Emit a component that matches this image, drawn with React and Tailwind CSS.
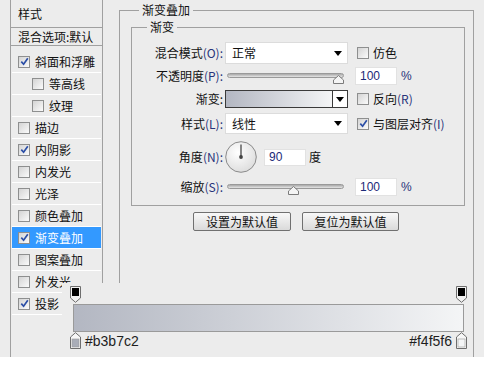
import React from "react";

const items = [
  { label: "斜面和浮雕", checked: true },
  { label: "等高线", indent: true },
  { label: "纹理", indent: true },
  { label: "描边" },
  { label: "内阴影", checked: true },
  { label: "内发光" },
  { label: "光泽" },
  { label: "颜色叠加" },
  { label: "渐变叠加", checked: true, active: true },
  { label: "图案叠加" },
  { label: "外发光" },
  { label: "投影", checked: true },
];

function Check({ checked }) {
  return (
    <span className="flex h-[12px] w-[12px] shrink-0 items-center justify-center border border-[#8e8f8f] bg-gradient-to-br from-[#d4d4d4] to-[#fbfbfb]">
      {checked && (
        <svg width="9" height="9" viewBox="0 0 9 9">
          <path d="M1.3 4.6 L3.6 7.2 L7.8 1.2" stroke="#2b4ea6" strokeWidth="1.7" fill="none" />
        </svg>
      )}
    </span>
  );
}

function Arrow() {
  return <span className="h-0 w-0 border-x-[4px] border-t-[5px] border-x-transparent border-t-black" />;
}

function Key({ children }) {
  return <span className="text-[#27337a]">{children}</span>;
}

function Label({ children }) {
  return <span className="w-[91px] shrink-0 text-right">{children}</span>;
}

function Thumb() {
  return (
    <svg width="11" height="9" viewBox="0 0 11 9">
      <path d="M5.5 0.5 L10.5 5 V8.5 H0.5 V5 Z" fill="#f4f4f4" stroke="#7b7b7b" />
    </svg>
  );
}

function Slider({ pos }) {
  return (
    <div className="relative ml-[2px] h-[18px] w-[123px]">
      <div className="ml-[2px] mt-[6px] h-[5px] w-[117px] rounded-full border border-[#9a9a9a] bg-gradient-to-b from-[#a9a9a9] to-[#e6e6e6]" />
      <div className="absolute top-[8px]" style={{ left: pos }}>
        <Thumb />
      </div>
    </div>
  );
}

function NumBox({ value, w = "w-[42px]", h = "h-[18px]" }) {
  return (
    <span className={`${w} ${h} flex items-center border border-[#e2e2e2] bg-white pl-[4px] font-['Liberation_Sans',sans-serif] text-[12px] text-[#1c2a78]`}>
      {value}
    </span>
  );
}

function Select({ value }) {
  return (
    <div className="ml-[2px] flex h-full w-[123px] items-center justify-between border border-[#dcdcdc] bg-white pl-[6px] pr-[5px]">
      <span>{value}</span>
      <Arrow />
    </div>
  );
}

function LeftPanel() {
  return (
    <div className="ml-[10px] flex h-full w-[93px] flex-col border-x border-[#a0a0a0] px-[1px]">
      <div className="-mx-[1px] flex h-[28px] items-center border-b border-[#a0a0a0] pl-[7px]">样式</div>
      <div className="-mx-[1px] flex h-[18px] items-center border-b border-[#a0a0a0] pl-[7px] whitespace-nowrap">
        混合选项:默认
      </div>
      <div className="pt-[5px]">
        {items.map((it) => (
          <div
            key={it.label}
            className={`flex h-[22px] items-center gap-[5px] border-b border-white whitespace-nowrap ${
              it.indent ? "pl-[20px]" : "pl-[6px]"
            } ${it.active ? "bg-[#3399ff] text-white" : ""}`}
          >
            <Check checked={it.checked} />
            <span>{it.label}</span>
          </div>
        ))}
      </div>
    </div>
  );
}

function TopStop() {
  return (
    <svg width="11" height="17" viewBox="0 0 11 17">
      <path d="M0.5 0.5 H10.5 V12 L5.5 16.3 L0.5 12 Z" fill="#f2f2f2" stroke="#6e6e6e" />
      <rect x="2" y="2" width="7" height="8" fill="#000" />
    </svg>
  );
}

function BottomStop({ color }) {
  return (
    <svg width="11" height="17" viewBox="0 0 11 17">
      <path d="M5.5 0.7 L10.5 5 V16.5 H0.5 V5 Z" fill="#f7f7f7" stroke="#6e6e6e" />
      <rect x="2" y="7" width="7" height="8" fill={color} stroke="#9a9a9a" strokeWidth="0.6" />
    </svg>
  );
}

function GradientOverlay() {
  return (
    <div className="absolute left-[62px] top-[283px] flex h-[74px] w-[409px] flex-col bg-[#ececec]">
      <div className="mt-[3px] flex h-[17px] justify-between pl-[8px] pr-[4px]">
        <TopStop />
        <TopStop />
      </div>
      <div className="ml-[11px] mt-[1px] h-[28px] w-[391px] border border-[#9a9a9a] bg-gradient-to-r from-[#b3b7c2] to-[#f4f5f6]" />
      <div className="mt-[0px] flex h-[17px] items-center justify-between pl-[8px] pr-[4px] font-['Liberation_Sans',sans-serif] text-[14px] text-[#1e1e1e]">
        <div className="flex items-center gap-[4px]">
          <BottomStop color="#a9adb8" />
          <span className="leading-none">#b3b7c2</span>
        </div>
        <div className="flex items-center gap-[4px]">
          <span className="leading-none">#f4f5f6</span>
          <BottomStop color="#f4f5f6" />
        </div>
      </div>
    </div>
  );
}

function Dial() {
  return (
    <svg width="32" height="32" viewBox="0 0 32 32" className="ml-[2px]">
      <defs>
        <radialGradient id="dialg" cx="0.4" cy="0.35" r="0.7">
          <stop offset="0" stopColor="#ffffff" />
          <stop offset="1" stopColor="#dcdcdc" />
        </radialGradient>
      </defs>
      <circle cx="16" cy="16" r="15.3" fill="url(#dialg)" stroke="#8a8a8a" />
      <line x1="16" y1="16" x2="16" y2="3.5" stroke="#555" strokeWidth="1.4" />
      <circle cx="16" cy="16" r="1.9" fill="#444" />
    </svg>
  );
}

function Button({ children, w }) {
  return (
    <button className={`${w} flex h-[19px] items-center justify-center rounded-[2px] border border-[#707070] bg-gradient-to-b from-[#f8f8f8] to-[#dadada] text-[12px] leading-none text-[#111]`}>
      {children}
    </button>
  );
}

export default function App() {
  return (
    <div className="h-[373px] w-[484px] overflow-hidden bg-white font-['Noto_Sans_CJK_SC',sans-serif] text-[12px] text-[#111]">
      <div className="relative flex h-[357px] bg-[#ececec]">
        <LeftPanel />
        <fieldset className="ml-[16px] mt-[2px] h-[355px] w-[355px] min-w-0 border border-b-0 border-[#a0a0a0] p-0">
          <legend className="ml-[19px] px-[3px] leading-[16px]">渐变叠加</legend>
          <fieldset className="ml-[11px] mt-[1px] w-[334px] min-w-0 border border-[#a0a0a0] p-0 pb-[9px] pt-[7px]">
            <legend className="ml-[15px] px-[3px] leading-[16px]">渐变</legend>

            <div className="flex h-[22px] items-center">
              <Label>
                混合模式<Key>(O):</Key>
              </Label>
              <Select value="正常" />
              <div className="ml-[9px] flex items-center gap-[4px]">
                <Check />
                <span>仿色</span>
              </div>
            </div>

            <div className="mt-[3px] flex h-[18px] items-center">
              <Label>
                不透明度<Key>(P):</Key>
              </Label>
              <Slider pos={108} />
              <span className="ml-[7px]">
                <NumBox value="100" />
              </span>
              <span className="ml-[4px] font-['Liberation_Sans',sans-serif] text-[#27337a]">%</span>
            </div>

            <div className="mt-[5px] flex h-[18px] items-center">
              <Label>渐变:</Label>
              <div className="ml-[2px] flex h-full w-[123px] border border-[#3a3a3a]">
                <div className="h-full flex-1 bg-gradient-to-r from-[#b3b7c2] to-[#f4f5f6]" />
                <div className="flex h-full w-[15px] items-center justify-center border-l border-[#3a3a3a] bg-white">
                  <Arrow />
                </div>
              </div>
              <div className="ml-[9px] flex items-center gap-[4px]">
                <Check />
                <span>
                  反向<Key>(R)</Key>
                </span>
              </div>
            </div>

            <div className="mt-[5px] flex h-[21px] items-center">
              <Label>
                样式<Key>(L):</Key>
              </Label>
              <Select value="线性" />
              <div className="ml-[9px] flex items-center gap-[4px]">
                <Check checked />
                <span>
                  与图层对齐<Key>(I)</Key>
                </span>
              </div>
            </div>

            <div className="mt-[7px] flex h-[32px] items-center">
              <Label>
                角度<Key>(N):</Key>
              </Label>
              <Dial />
              <span className="ml-[7px]">
                <NumBox value="90" h="h-[17px]" />
              </span>
              <span className="ml-[3px]">度</span>
            </div>

            <div className="mt-[5px] flex h-[18px] items-center">
              <Label>
                缩放<Key>(S):</Key>
              </Label>
              <Slider pos={63} />
              <span className="ml-[7px]">
                <NumBox value="100" />
              </span>
              <span className="ml-[4px] font-['Liberation_Sans',sans-serif] text-[#27337a]">%</span>
            </div>
          </fieldset>

          <div className="ml-[73px] mt-[6px] flex gap-[11px]">
            <Button w="w-[98px]">设置为默认值</Button>
            <Button w="w-[97px]">复位为默认值</Button>
          </div>
        </fieldset>
        <GradientOverlay />
      </div>
    </div>
  );
}
